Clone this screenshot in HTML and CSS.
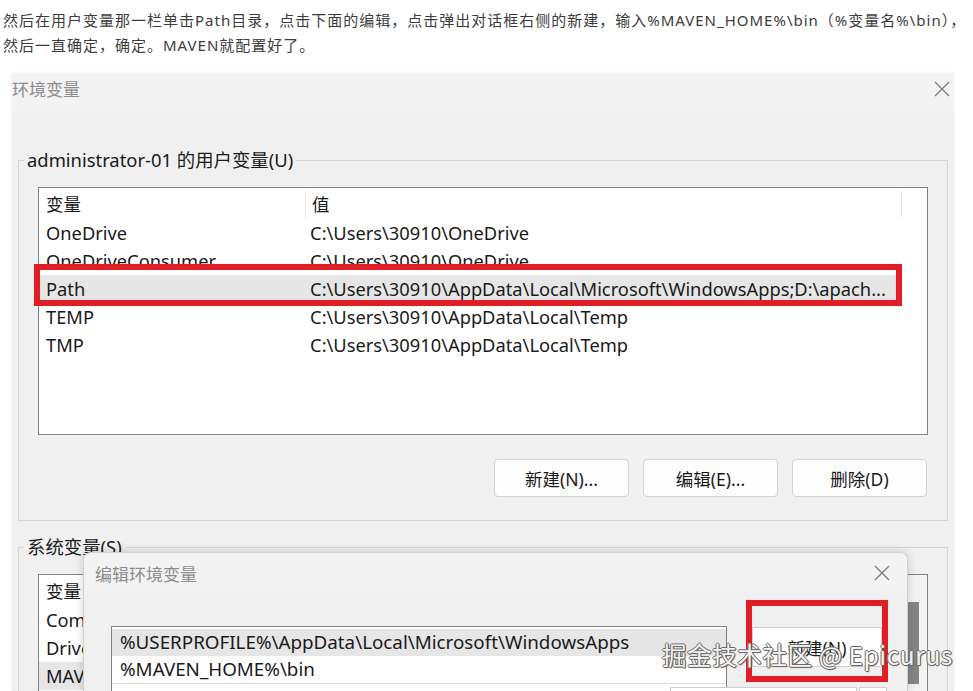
FILE: index.html
```html
<!DOCTYPE html>
<html lang="zh-CN">
<head>
    <meta charset="UTF-8">
    <title>配置 MAVEN 环境变量</title>
    <link rel="stylesheet" href="styles.css">
</head>
<body>

<p class="intro">然后在用户变量那一栏单击Path目录，点击下面的编辑，点击弹出对话框右侧的新建，输入%MAVEN_HOME%\bin（%变量名%\bin），<br>然后一直确定，确定。MAVEN就配置好了。</p>

<div class="envwin">
    <div class="win-title">
        <span>环境变量</span>
        <svg class="close" width="18" height="18" viewBox="0 0 18 18"><path d="M2 2L16 16M16 2L2 16" stroke="#7a7a7a" stroke-width="1.3" fill="none"/></svg>
    </div>

    <fieldset class="group">
        <legend>administrator-01 的用户变量(U)</legend>
        <div class="listbox user-list">
            <div class="list-head">
                <div class="cell name">变量</div>
                <div class="cell value">值</div>
            </div>
            <div class="row"><div class="cell name">OneDrive</div><div class="cell value">C:\Users\30910\OneDrive</div></div>
            <div class="row"><div class="cell name">OneDriveConsumer</div><div class="cell value">C:\Users\30910\OneDrive</div></div>
            <div class="row sel"><div class="cell name">Path</div><div class="cell value">C:\Users\30910\AppData\Local\Microsoft\WindowsApps;D:\apach...</div></div>
            <div class="row"><div class="cell name">TEMP</div><div class="cell value">C:\Users\30910\AppData\Local\Temp</div></div>
            <div class="row"><div class="cell name">TMP</div><div class="cell value">C:\Users\30910\AppData\Local\Temp</div></div>
        </div>
        <div class="btns">
            <button class="btn">新建(N)...</button>
            <button class="btn">编辑(E)...</button>
            <button class="btn">删除(D)</button>
        </div>
    </fieldset>

    <fieldset class="group sys">
        <legend>系统变量(S)</legend>
        <div class="listbox sys-list">
            <div class="sys-rows">
                <div class="list-head">
                    <div class="cell name">变量</div>
                    <div class="cell value">值</div>
                </div>
                <div class="row"><div class="cell name">ComSpec</div></div>
                <div class="row"><div class="cell name">DriverData</div></div>
                <div class="row sel"><div class="cell name">MAVEN_HOME</div></div>
            </div>
            <div class="scrollbar"><div class="thumb"></div></div>
        </div>
    </fieldset>
</div>

<div class="editwin">
    <div class="edit-title">
        <span>编辑环境变量</span>
        <svg class="close" width="18" height="18" viewBox="0 0 18 18"><path d="M2 2L16 16M16 2L2 16" stroke="#7a7a7a" stroke-width="1.3" fill="none"/></svg>
    </div>
    <div class="edit-body">
        <div class="listbox path-list">
            <div class="path-row sel">%USERPROFILE%\AppData\Local\Microsoft\WindowsApps</div>
            <div class="path-row editing">%MAVEN_HOME%\bin</div>
        </div>
        <div class="side-btns">
            <button class="btn side">新建(N)</button>
        </div>
    </div>
    <div class="stub wide"></div>
    <div class="stub narrow"></div>
</div>

<div class="mark box-path"></div>
<div class="mark box-new"></div>

<div class="watermark">掘金技术社区 @ Epicurus</div>

</body>
</html>
```

FILE: styles.css
```css
html, body {
    height: 691px;
    overflow: hidden;
}
body {
    margin: 0;
    background: #fff;
    font-family: "Noto Sans", "Noto Sans CJK SC", sans-serif;
    color: #1a1a1a;
    position: relative;
}
.intro {
    margin: 0;
    padding: 8px 3px 0;
    font-family: "Noto Sans", "Noto Sans CJK SC", sans-serif;
    font-size: 15px;
    line-height: 25px;
    letter-spacing: 1px;
    color: #3c3c3c;
    white-space: nowrap;
}

/* main window */
.envwin {
    margin: 15px 0 0 12px;
    width: 942px;
    height: 618px;
    background: #f0f0f0;
    overflow: hidden;
    box-shadow: 0 0 4px rgba(0, 0, 0, 0.06);
}
.win-title {
    height: 40px;
    background: #f3f3f3;
    display: flex;
    justify-content: space-between;
    align-items: flex-start;
    line-height: 32px;
    font-family: "Noto Sans CJK SC", sans-serif;
    font-size: 17px;
    color: #8c8c8c;
}
.win-title .close {
    margin: 7px 3px 0 0;
}
.group {
    margin: 35px 6px 0;
    padding: 15px 19px 23px;
    border: 1px solid #d6d6d6;
    min-width: 0;
}
.group.sys {
    margin-top: 14px;
}
.group legend {
    font-size: 18.4px;
    line-height: 24px;
    padding: 0 3px;
    margin-left: -14px;
    color: #1a1a1a;
}

.listbox {
    background: #fff;
    border: 1px solid #828282;
    font-size: 18.3px;
}
.user-list {
    height: 246px;
}
.list-head {
    display: flex;
    align-items: center;
    height: 31px;
}
.list-head .cell {
    height: 28px;
    line-height: 28px;
    border-right: 1px solid #e6e6e6;
    font-family: "Noto Sans CJK SC", sans-serif;
    font-size: 17.5px;
}
.cell {
    white-space: nowrap;
    overflow: hidden;
}
.cell.name {
    width: 259px;
    padding-left: 7px;
}
.cell.value {
    width: 589px;
    padding-left: 6px;
}
.row {
    display: flex;
    width: 858px;
    height: 28px;
    line-height: 28px;
}
.row.sel {
    background: #e6e6e6;
}

.btns {
    display: flex;
    justify-content: flex-end;
    gap: 14px;
    margin-top: 24px;
    padding-right: 1px;
}
.btn {
    width: 135px;
    height: 38px;
    background: #fdfdfd;
    border: 1px solid #d2d2d2;
    border-radius: 4px;
    font-family: "Noto Sans", "Noto Sans CJK SC", sans-serif;
    font-size: 17.5px;
    color: #1a1a1a;
    padding: 0;
}

.sys-list {
    height: 200px;
    display: flex;
}
.sys-rows {
    flex: 1;
}
.scrollbar {
    width: 20px;
    background: #f3f3f3;
}
.scrollbar .thumb {
    margin-top: 27px;
    width: 12px;
    height: 82px;
    background: #868686;
}

/* edit dialog */
.editwin {
    position: absolute;
    left: 83px;
    top: 552px;
    width: 823px;
    height: 138px;
    background: #f0f0f0;
    border: 1px solid #d0d0d0;
    border-bottom: none;
    border-radius: 8px 8px 0 0;
    box-shadow: 0 0 10px rgba(0, 0, 0, 0.18);
    overflow: hidden;
}
.edit-title {
    height: 40px;
    display: flex;
    justify-content: space-between;
    align-items: center;
    padding: 0 16px 0 11px;
    background: #f3f3f3;
    font-family: "Noto Sans CJK SC", sans-serif;
    font-size: 17px;
    color: #8c8c8c;
}
.edit-body {
    display: flex;
    gap: 25px;
    padding: 33px 0 0 27px;
}
.path-list {
    width: 614px;
    height: 100px;
    padding-top: 2px;
    font-size: 18.8px;
}
.path-row {
    height: 27px;
    line-height: 27px;
    padding-left: 8px;
    white-space: nowrap;
}
.path-row.sel {
    background: #e6e6e6;
}
.path-row.editing {
    border-bottom: 1px solid #dcdcdc;
}
.side-btns {
    padding-top: 1px;
}
.btn.side {
    width: 130px;
    height: 40px;
    border-radius: 0;
    border-color: #cdcdcd;
    background: #fff;
}
.stub {
    position: absolute;
    top: 134px;
    height: 12px;
    background: #fff;
    border: 1px solid #cfcfcf;
}
.stub.wide {
    left: 586px;
    width: 185px;
}
.stub.narrow {
    left: 775px;
    width: 26px;
}

/* annotations */
.mark {
    position: absolute;
    border: 6px solid #e21e25;
    box-sizing: border-box;
}
.box-path {
    left: 34px;
    top: 264px;
    width: 868px;
    height: 42px;
}
.box-new {
    left: 746px;
    top: 600px;
    width: 142px;
    height: 82px;
}
.watermark {
    position: absolute;
    left: 662px;
    top: 639px;
    font-family: "Noto Sans CJK SC", sans-serif;
    font-size: 24.5px;
    line-height: 32px;
    color: #f4f4f4;
    letter-spacing: 0.6px;
    text-shadow: 1px 0 0 #6a6a6a, -1px 0 0 #6a6a6a, 0 1px 0 #6a6a6a, 0 -1px 0 #6a6a6a, 1px 1px 1px #555;
}
```
